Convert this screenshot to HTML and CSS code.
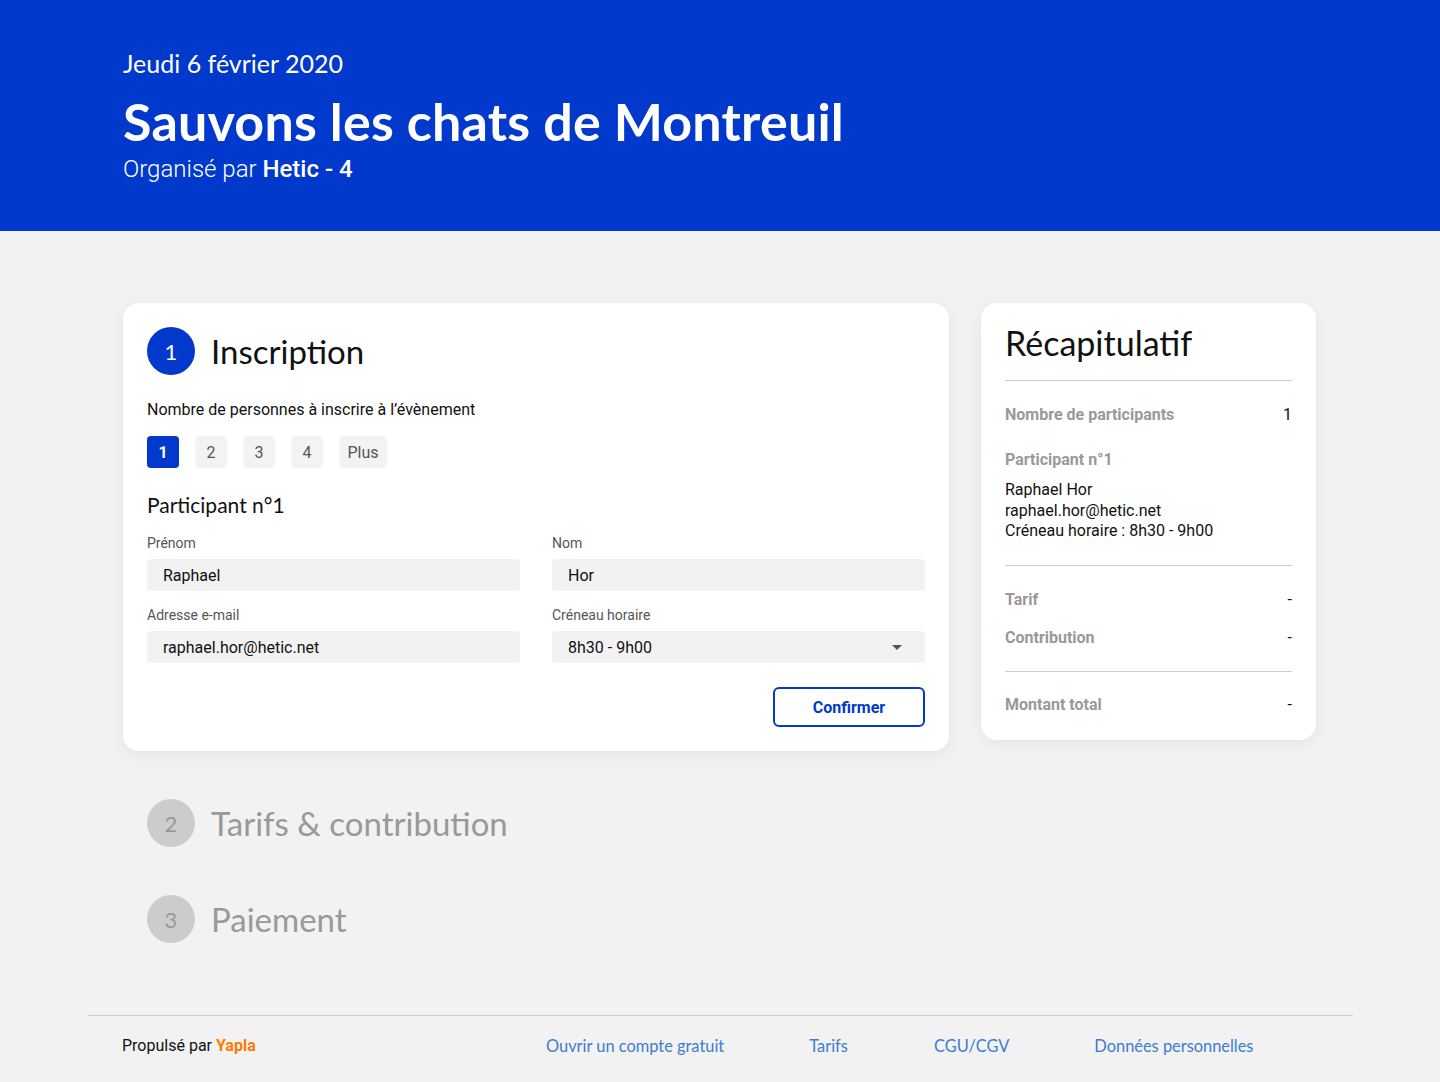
FILE: index.html
```html
<!DOCTYPE html>
<html lang="fr">
<head>
<meta charset="utf-8">
<title>Sauvons les chats de Montreuil</title>
<link rel="stylesheet" href="styles.css">
</head>
<body>
<header class="hero">
  <div class="hero-inner">
    <p class="hero-date">Jeudi 6 février 2020</p>
    <h1 class="hero-title">Sauvons les chats de Montreuil</h1>
    <p class="hero-org">Organisé par <strong>Hetic - 4</strong></p>
  </div>
</header>

<main class="main">
  <div class="columns">
    <div class="left">
      <section class="card card-form">
        <div class="step-head">
          <span class="step-num active">1</span>
          <h2 class="step-title">Inscription</h2>
        </div>
        <p class="count-label">Nombre de personnes à inscrire à l’évènement</p>
        <div class="count-btns">
          <span class="cbtn selected">1</span>
          <span class="cbtn">2</span>
          <span class="cbtn">3</span>
          <span class="cbtn">4</span>
          <span class="cbtn wide">Plus</span>
        </div>
        <h3 class="part-title">Participant n°1</h3>
        <div class="fields">
          <div class="field">
            <label class="flabel">Prénom</label>
            <div class="finput">Raphael</div>
          </div>
          <div class="field">
            <label class="flabel">Nom</label>
            <div class="finput">Hor</div>
          </div>
          <div class="field">
            <label class="flabel">Adresse e-mail</label>
            <div class="finput">raphael.hor@hetic.net</div>
          </div>
          <div class="field">
            <label class="flabel">Créneau horaire</label>
            <div class="finput select"><span>8h30 - 9h00</span><span class="caret"></span></div>
          </div>
        </div>
        <div class="actions">
          <button class="confirm">Confirmer</button>
        </div>
      </section>

      <div class="step-head step-off">
        <span class="step-num">2</span>
        <h2 class="step-title">Tarifs &amp; contribution</h2>
      </div>
      <div class="step-head step-off">
        <span class="step-num">3</span>
        <h2 class="step-title">Paiement</h2>
      </div>
    </div>

    <aside class="card card-recap">
      <h2 class="recap-title">Récapitulatif</h2>
      <div class="recap-block">
        <div class="rrow"><span class="rlabel">Nombre de participants</span><span class="rval">1</span></div>
        <div class="rlabel rsub">Participant n°1</div>
        <div class="rinfo">Raphael Hor<br>raphael.hor@hetic.net<br>Créneau horaire : 8h30 - 9h00</div>
      </div>
      <div class="recap-block">
        <div class="rrow"><span class="rlabel">Tarif</span><span class="rval">-</span></div>
        <div class="rrow"><span class="rlabel">Contribution</span><span class="rval">-</span></div>
      </div>
      <div class="recap-block last">
        <div class="rrow"><span class="rlabel">Montant total</span><span class="rval">-</span></div>
      </div>
    </aside>
  </div>
</main>

<footer class="footer">
  <div class="footer-inner">
    <p class="powered">Propulsé par <span class="yapla">Yapla</span></p>
    <nav class="flinks">
      <a class="l1">Ouvrir un compte gratuit</a>
      <a class="l2">Tarifs</a>
      <a class="l3">CGU/CGV</a>
      <a class="l4">Données personnelles</a>
    </nav>
  </div>
</footer>
</body>
</html>
```

FILE: styles.css
```css
* { box-sizing: border-box; }
html, body { margin: 0; padding: 0; }
body {
  background: #f2f2f2;
  font-family: Roboto, "Liberation Sans", sans-serif;
  color: #111;
}
p, h1, h2, h3 { margin: 0; }

.hero {
  background: #0039cb;
  height: 231px;
  color: #fff;
}
.hero-inner {
  padding: 47px 0 0 123px;
}
.hero-date {
  font-family: Lato, "Open Sans", sans-serif;
  font-size: 25px;
  line-height: 32px;
  font-weight: 400;
}
.hero-title {
  font-family: Lato, "Open Sans", sans-serif;
  font-size: 52px;
  font-weight: 700;
  line-height: 60px;
  margin-top: 12px;
  letter-spacing: 0.2px;
}
.hero-org {
  font-size: 24px;
  font-weight: 300;
  line-height: 30px;
  margin-top: 3px;
}
.hero-org strong { font-weight: 500; }

.main { padding: 72px 0 0 123px; }
.columns {
  display: flex;
  gap: 32px;
  align-items: flex-start;
}
.left { width: 826px; }
.card {
  background: #fff;
  border-radius: 16px;
  box-shadow: 0 4px 14px rgba(0,0,0,0.06);
}
.card-form {
  padding: 24px 24px 24px 24px;
  height: 448px;
}
.step-head {
  display: flex;
  align-items: center;
  gap: 16px;
  height: 48px;
}
.step-num {
  width: 48px; height: 48px;
  border-radius: 50%;
  background: #ccc;
  color: #999;
  display: flex; align-items: center; justify-content: center;
  font-family: Lato, "Open Sans", sans-serif;
  font-size: 22px;
}
.step-num.active { background: #0039cb; color: #fff; }
.step-title {
  font-family: Lato, "Open Sans", sans-serif;
  font-weight: 400;
  font-size: 33px;
  color: #111;
}
.step-off .step-title { color: #999; }
.step-off { margin-left: 24px; }
.card-form + .step-off { margin-top: 48px; }
.step-off + .step-off { margin-top: 48px; }

.count-label {
  font-size: 16px;
  margin-top: 25px;
  line-height: 20px;
}
.count-btns {
  display: flex;
  gap: 16px;
  margin-top: 16px;
}
.cbtn {
  width: 32px; height: 32px;
  border-radius: 4px;
  background: #f3f3f3;
  color: #555;
  display: flex; align-items: center; justify-content: center;
  font-size: 16px;
}
.cbtn.wide { width: 48px; }
.cbtn.selected { background: #0039cb; color: #fff; font-weight: 700; }

.part-title {
  font-family: Lato, "Open Sans", sans-serif;
  font-weight: 400;
  font-size: 21px;
  line-height: 26px;
  margin-top: 24px;
}
.fields {
  display: grid;
  grid-template-columns: 1fr 1fr;
  column-gap: 32px;
  row-gap: 16px;
  margin-top: 17px;
}
.flabel {
  display: block;
  font-size: 14px;
  color: #555;
  line-height: 16px;
  margin-bottom: 8px;
}
.finput {
  height: 32px;
  background: #f2f2f2;
  border-radius: 4px;
  padding: 0 16px;
  display: flex; align-items: center;
  font-size: 16px;
  color: #111;
}
.select { justify-content: space-between; }
.caret {
  width: 0; height: 0;
  border-left: 5px solid transparent;
  border-right: 5px solid transparent;
  border-top: 5px solid #555;
  margin-right: 7px;
}
.actions {
  display: flex;
  justify-content: flex-end;
  margin-top: 24px;
}
.confirm {
  width: 152px; height: 40px;
  background: #fff;
  border: 2px solid #0039cb;
  border-radius: 6px;
  color: #0039cb;
  font-family: Roboto, "Liberation Sans", sans-serif;
  font-weight: 700;
  font-size: 16px;
}

.card-recap {
  width: 335px;
  padding: 20px 24px 24px;
  height: 437px;
}
.recap-title {
  font-family: Lato, "Open Sans", sans-serif;
  font-weight: 400;
  font-size: 34px;
  line-height: 40px;
  padding-bottom: 17px;
  border-bottom: 1px solid #ccc;
}
.recap-block {
  padding: 24px 0 23px;
  border-bottom: 1px solid #ccc;
}
.recap-block.last { border-bottom: none; padding-top: 23px; }
.rrow {
  display: flex;
  justify-content: space-between;
  align-items: center;
  line-height: 20px;
}
.rrow + .rrow { margin-top: 18px; }
.rlabel {
  color: #999;
  font-weight: 700;
  font-size: 16px;
  line-height: 20px;
}
.rval { font-size: 16px; color: #111; }
.rsub { margin-top: 25px; }
.rinfo {
  margin-top: 10px;
  font-size: 16px;
  line-height: 20.5px;
}

.footer { margin-top: 72px; padding: 0 87px 0 88px; }
.footer-inner {
  border-top: 1px solid #ccc;
  height: 60px;
  display: flex;
  align-items: center;
  padding: 0 0 0 34px;
}
.powered { font-size: 16px; color: #111; width: 424px; }
.yapla { color: #ff7a00; font-weight: 700; }
.flinks {
  display: flex;
  font-family: Lato, "Open Sans", sans-serif;
  font-size: 16.4px;
  color: #3d7dd0;
}
.flinks a { color: #3d7dd0; }
.l2 { margin-left: 85px; }
.l3 { margin-left: 86px; }
.l4 { margin-left: 85px; }
```
